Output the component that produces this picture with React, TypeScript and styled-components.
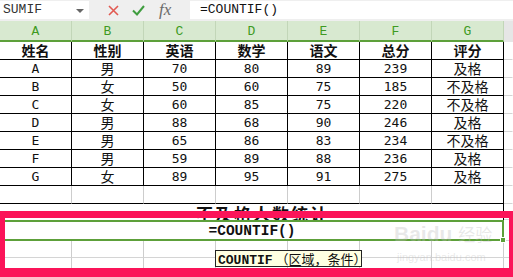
import React from 'react';
import styled, { createGlobalStyle } from 'styled-components';

const GlobalStyle = createGlobalStyle`
  html, body { margin: 0; padding: 0; background: #fff; overflow: hidden; }
  * { box-sizing: border-box; }
`;

const COLS = '72px 72px 72px 72px 72px 72px 72px 1fr';
const GREEN = '#5da03a';
const MONO = '"Liberation Mono", "Noto Sans CJK SC", monospace';
const CJK = '"Noto Sans CJK SC", "Noto Sans", sans-serif';

const Page = styled.div`
  position: relative;
  width: 513px;
  height: 277px;
  overflow: hidden;
  display: flex;
  flex-direction: column;
`;

const FormulaBar = styled.div`
  display: flex;
  align-items: flex-start;
  height: 21px;
  padding-top: 1px;
  background: #efefef;
`;

const NameBox = styled.div`
  position: relative;
  width: 89px;
  height: 18px;
  background: #fff;
  font-family: ${MONO};
  font-size: 13px;
  line-height: 18px;
  color: #333;
  padding-left: 3px;
`;

const Caret = styled.span`
  position: absolute;
  right: 5px;
  top: 8px;
  border-left: 4px solid transparent;
  border-right: 4px solid transparent;
  border-top: 4px solid #666;
`;

const Tools = styled.div`
  display: flex;
  align-items: center;
  gap: 13px;
  width: 101px;
  height: 18px;
  padding-left: 19px;
`;

const Fx = styled.span`
  font-family: "Liberation Serif", serif;
  font-style: italic;
  font-size: 17px;
  color: #6b6b6b;
  line-height: 18px;
  margin-left: 1px;
`;

const FormulaInput = styled.div`
  flex: 1;
  height: 18px;
  background: #fff;
  font-family: ${MONO};
  font-size: 13px;
  line-height: 18px;
  color: #111;
  padding-left: 10px;
`;

const Row = styled.div<{ $h: number }>`
  display: grid;
  grid-template-columns: ${COLS};
  height: ${p => p.$h}px;
`;

const ColHead = styled.div<{ $extra?: boolean }>`
  display: flex;
  align-items: center;
  justify-content: center;
  background: ${p => (p.$extra ? '#e6e6e6' : '#d8e9d0')};
  border-right: 1px solid ${p => (p.$extra ? '#e6e6e6' : '#c2d6b8')};
  border-bottom: 2px solid ${p => (p.$extra ? '#e6e6e6' : GREEN)};
  color: #3e9a22;
  font-family: ${MONO};
  font-size: 13px;
  padding-top: 1px;
`;

const Cell = styled.div<{ $right: string; $bottom: string; $bold?: boolean; $cjk?: boolean }>`
  display: flex;
  align-items: center;
  justify-content: center;
  border-right: 1px solid ${p => p.$right};
  border-bottom: 1px solid ${p => p.$bottom};
  color: #111;
  white-space: nowrap;
  font-family: ${p => (p.$cjk ? CJK : '"DejaVu Sans Mono", monospace')};
  font-size: ${p => (p.$cjk ? '14px' : '13px')};
  font-weight: ${p => (p.$bold ? 700 : 400)};
  line-height: 15px;
`;

const Merged = styled.div`
  grid-column: 1 / 8;
  border-right: 1px solid #000;
  overflow: hidden;
  text-align: center;
  padding-left: 22px;
  font-family: ${CJK};
  font-weight: 700;
  font-size: 17px;
  line-height: 20px;
  color: #111;
  letter-spacing: 2px;
`;

const ActiveCell = styled.div`
  position: relative;
  grid-column: 1 / 8;
  border: 2px solid ${GREEN};
  display: flex;
  align-items: center;
  justify-content: center;
  font-family: ${MONO};
  font-weight: 700;
  font-size: 14.5px;
  line-height: 16px;
  color: #111;
`;

const FillHandle = styled.span`
  position: absolute;
  right: -4px;
  bottom: -4px;
  width: 6px;
  height: 6px;
  background: ${GREEN};
  border: 1px solid #fff;
`;

const Tooltip = styled.div`
  position: absolute;
  left: 215px;
  top: 250px;
  height: 17px;
  width: 147px;
  background: #ffffe1;
  border: 1px solid #222;
  font-family: ${CJK};
  font-size: 13px;
  line-height: 15px;
  color: #111;
  padding-left: 2px;
  white-space: nowrap;
`;

const TipFn = styled.b`
  font-family: ${MONO};
  font-size: 13px;
`;

const Highlight = styled.div`
  position: absolute;
  left: 0;
  top: 211px;
  width: 513px;
  height: 66px;
  border-style: solid;
  border-color: #fb1459;
  border-width: 7px 4px 9px 5px;
  pointer-events: none;
`;

const Watermark = styled.div`
  position: absolute;
  left: 394px;
  top: 221px;
  display: flex;
  flex-direction: column;
  align-items: flex-start;
  color: rgba(190, 190, 190, 0.35);
  font-family: "Liberation Sans", sans-serif;
  pointer-events: none;
`;

const MarkTop = styled.div`
  font-size: 21px;
  font-weight: 700;
  line-height: 26px;
  display: flex;
  align-items: baseline;
  gap: 6px;
`;

const MarkCjk = styled.span`
  font-family: ${CJK};
  font-size: 17px;
  font-weight: 400;
`;

const MarkUrl = styled.div`
  font-size: 11px;
  line-height: 14px;
  margin-top: 3px;
  margin-left: 3px;
`;

const headers = ['姓名', '性别', '英语', '数学', '语文', '总分', '评分'];
const data = [
  ['A', '男', '70', '80', '89', '239', '及格'],
  ['B', '女', '50', '60', '75', '185', '不及格'],
  ['C', '女', '60', '85', '75', '220', '不及格'],
  ['D', '男', '88', '68', '90', '246', '及格'],
  ['E', '男', '65', '86', '83', '234', '不及格'],
  ['F', '男', '59', '89', '88', '236', '及格'],
  ['G', '女', '89', '95', '91', '275', '及格'],
];

const isCjk = (s: string) => /[^\x00-\x7f]/.test(s);

const DataRow: React.FC<{ cells: string[]; bold?: boolean }> = ({ cells, bold }) => (
  <Row $h={18}>
    {cells.map((c, i) => (
      <Cell key={i} $right="#000" $bottom="#000" $bold={bold} $cjk={isCjk(c)}>
        {c}
      </Cell>
    ))}
    <Cell $right="transparent" $bottom="#d4d4d4" />
  </Row>
);

const GridRow: React.FC<{ h: number; bottom: string; lastBlack?: boolean }> = ({ h, bottom, lastBlack }) => (
  <Row $h={h}>
    {Array.from({ length: 7 }).map((_, i) => (
      <Cell key={i} $right={lastBlack && i === 6 ? '#000' : '#cdcdcd'} $bottom={bottom} />
    ))}
    <Cell $right="transparent" $bottom="#d4d4d4" />
  </Row>
);

const App: React.FC = () => (
  <Page>
    <GlobalStyle />
    <FormulaBar>
      <NameBox>
        SUMIF
        <Caret />
      </NameBox>
      <Tools>
        <svg width="11" height="11" viewBox="0 0 11 11">
          <path d="M1 1 L10 10 M10 1 L1 10" stroke="#e25a52" strokeWidth="1.6" />
        </svg>
        <svg width="13" height="11" viewBox="0 0 13 11">
          <path d="M1 5.5 L5 9.5 L12 1" stroke="#3f9d3f" strokeWidth="2" fill="none" />
        </svg>
        <Fx>fx</Fx>
      </Tools>
      <FormulaInput>=COUNTIF()</FormulaInput>
    </FormulaBar>

    <Row $h={21}>
      {['A', 'B', 'C', 'D', 'E', 'F', 'G'].map(l => (
        <ColHead key={l}>{l}</ColHead>
      ))}
      <ColHead $extra />
    </Row>

    <DataRow cells={headers} bold />
    {data.map((r, i) => (
      <DataRow key={i} cells={r} />
    ))}
    <GridRow h={18} bottom="#000" lastBlack />

    <Row $h={16}>
      <Merged>不及格人数统计</Merged>
      <Cell $right="transparent" $bottom="#d4d4d4" />
    </Row>

    <Row $h={21}>
      <ActiveCell>
        =COUNTIF()
        <FillHandle />
      </ActiveCell>
      <Cell $right="transparent" $bottom="#d4d4d4" />
    </Row>
    <GridRow h={17} bottom="#d4d4d4" />
    <GridRow h={18} bottom="#d4d4d4" />

    <Tooltip>
      <TipFn>COUNTIF</TipFn> （区域，条件）
    </Tooltip>

    <Watermark>
      <MarkTop>
        Baidu<MarkCjk>经验</MarkCjk>
      </MarkTop>
      <MarkUrl>jingyan.baidu.com</MarkUrl>
    </Watermark>

    <Highlight />
  </Page>
);

export default App;
